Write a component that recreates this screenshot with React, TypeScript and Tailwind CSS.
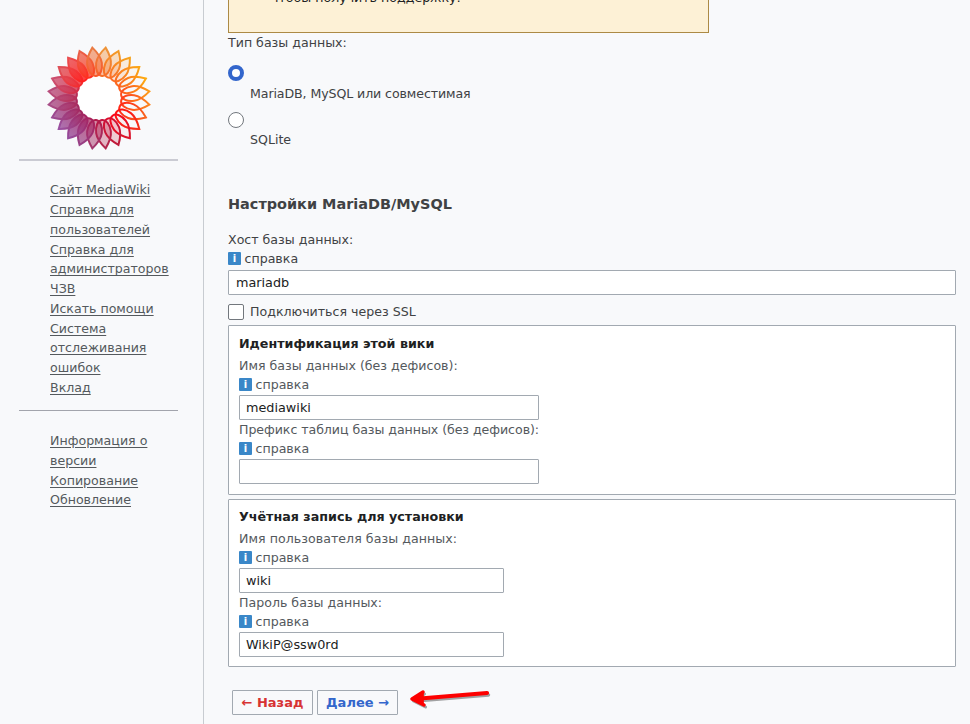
import React from "react";

type Petal = { outer: string; inner: string; fill: number };

const petals: Petal[] = [
  { outer: "#ee9438", inner: "#f5702c", fill: 0.42 },
  { outer: "#f39a26", inner: "#f8702a", fill: 0.28 },
  { outer: "#f5a31e", inner: "#fb6f26", fill: 0.14 },
  { outer: "#fba616", inner: "#fb6a22", fill: 0.04 },
  { outer: "#fdab12", inner: "#fd5f20", fill: 0 },
  { outer: "#fd9a18", inner: "#fd4f1e", fill: 0 },
  { outer: "#fb8420", inner: "#fe3f1c", fill: 0 },
  { outer: "#f9641f", inner: "#ff2a18", fill: 0 },
  { outer: "#f5301c", inner: "#ff1414", fill: 0 },
  { outer: "#d8142c", inner: "#f80a1c", fill: 0.05 },
  { outer: "#bd1c3c", inner: "#dc0c2c", fill: 0.2 },
  { outer: "#b0284e", inner: "#c41440", fill: 0.32 },
  { outer: "#a2386e", inner: "#b01c4c", fill: 0.5 },
  { outer: "#984288", inner: "#a8205a", fill: 0.7 },
  { outer: "#954c9c", inner: "#a42462", fill: 0.8 },
  { outer: "#9a52a2", inner: "#a02860", fill: 0.8 },
  { outer: "#9c4c94", inner: "#a42a62", fill: 0.8 },
  { outer: "#a84e88", inner: "#aa2c60", fill: 0.8 },
  { outer: "#b84e7c", inner: "#b83058", fill: 0.8 },
  { outer: "#cc5070", inner: "#d42e48", fill: 0.8 },
  { outer: "#de5058", inner: "#f42c30", fill: 0.82 },
  { outer: "#ea4e50", inner: "#ff2020", fill: 0.85 },
  { outer: "#ea6048", inner: "#ff3020", fill: 0.76 },
  { outer: "#ea7c44", inner: "#f85a2c", fill: 0.58 },
];

function Logo() {
  return (
    <svg className="block h-[104px] w-[104px]" viewBox="-52 -52 104 104">
      <defs>
        {petals.map((p, i) => (
          <linearGradient key={i} id={"petal" + i} gradientUnits="userSpaceOnUse" x1="0" y1="-50" x2="0" y2="-23">
            <stop offset="0" stopColor={p.outer} />
            <stop offset="1" stopColor={p.inner} />
          </linearGradient>
        ))}
      </defs>
      <circle r="24" fill="#fff" />
      {petals.map((p, i) => (
        <path
          key={i}
          transform={`rotate(${7.5 + i * 15})`}
          d="M0 -50.8C3.8 -46 7.4 -40.5 7.4 -34.5C7.4 -27.5 4.2 -22.300 0 -22.300C-4.2 -22.300 -7.4 -27.5 -7.4 -34.5C-7.4 -40.5 -3.8 -46 0 -50.8Z"
          fill={`url(#petal${i})`}
          fillOpacity={p.fill}
          stroke={`url(#petal${i})`}
          strokeWidth="2"
        />
      ))}
    </svg>
  );
}

function NavLinks({ items }: { items: string[] }) {
  return (
    <ul className="ml-[50px] w-[130px] text-[#54595d]">
      {items.map((t) => (
        <li key={t}>
          <a className="underline underline-offset-2">{t}</a>
        </li>
      ))}
    </ul>
  );
}

function Help() {
  return (
    <div className="flex h-5 items-center gap-[3.5px]">
      <span className="mb-px flex h-[13px] w-[13px] items-center justify-center rounded-[1px] bg-[#3a87c8] text-[10px] leading-none font-bold text-white">i</span>
      <span>справка</span>
    </div>
  );
}

function Field({ value, className }: { value: string; className: string }) {
  return (
    <div className={"flex h-[25px] items-center rounded-[1px] border border-[#a2a9b1] bg-white text-[12.8px] text-[#202122] " + className}>
      {value}
    </div>
  );
}

function Panel({ title, className, children }: { title: string; className: string; children: React.ReactNode }) {
  return (
    <section className={"rounded-[1px] border border-[#a2a9b1] bg-white pl-[10px] text-[#54595d] " + className}>
      <h3 className="h-[22px] text-[12.7px] font-bold text-[#202122]">{title}</h3>
      {children}
    </section>
  );
}

export default function App() {
  return (
    <div className="flex h-[724px] w-[970px] overflow-hidden bg-[#f8f9fb] font-['DejaVu_Sans',sans-serif] text-[12.6px] leading-5 text-[#404244]">
      <aside className="w-[204px] shrink-0 border-r border-[#c8ccd1] leading-[19.75px]">
        <div className="ml-[19px] flex h-[161px] w-[159px] justify-center border-b-2 border-[#cacbd3] pt-[46px]">
          <Logo />
        </div>
        <div className="h-[249px] pt-[19.4px]">
          <NavLinks
            items={[
              "Сайт MediaWiki",
              "Справка для пользователей",
              "Справка для администраторов",
              "ЧЗВ",
              "Искать помощи",
              "Система отслеживания ошибок",
              "Вклад",
            ]}
          />
        </div>
        <div className="ml-[19px] w-[159px] border-t border-[#a2a4ac]" />
        <div className="pt-5">
          <NavLinks items={["Информация о версии", "Копирование", "Обновление"]} />
        </div>
      </aside>
      <main className="ml-6 w-[728px]">
        <div className="h-[33px] w-[481px] overflow-hidden border border-t-0 border-[#ac8a45] bg-[#fdf1d6] pl-[42px] text-[#202122]">
          <p className="-mt-[12px]">чтобы получить поддержку:</p>
        </div>
        <p>Тип базы данных:</p>
        <div className="pt-3">
          <span className="block h-4 w-4 rounded-full border-[4px] border-[#3366cc] bg-white" />
          <p className="mt-[3px] pl-[22px] tracking-[-0.1px]">MariaDB, MySQL или совместимая</p>
        </div>
        <div className="pt-2">
          <span className="block h-4 w-4 rounded-full border border-[#72777d] bg-white" />
          <p className="mt-[2px] pl-[22px]">SQLite</p>
        </div>
        <h2 className="mt-[44px] text-[14.45px] font-bold">Настройки MariaDB/MySQL</h2>
        <p className="mt-4">Хост базы данных:</p>
        <div className="-mt-px">
          <Help />
        </div>
        <Field value="mariadb" className="mt-px w-[728px] px-[7px]" />
        <div className="mt-[7px] flex h-5 items-center gap-[6px]">
          <span className="mb-px h-4 w-4 rounded-[2px] border border-[#72777d] bg-white" />
          <span>Подключиться через SSL</span>
        </div>
        <Panel title="Идентификация этой вики" className="mt-[3px] h-[170px] pt-2">
          <p>Имя базы данных (без дефисов):</p>
          <div className="-mt-px h-5">
            <Help />
          </div>
          <Field value="mediawiki" className="w-[300px] px-[6px]" />
          <p className="tracking-[-0.06px]">Префикс таблиц базы данных (без дефисов):</p>
          <div className="-mt-px h-5">
            <Help />
          </div>
          <Field value="" className="w-[300px]" />
        </Panel>
        <Panel title="Учётная запись для установки" className="mt-1 h-[168px] pt-[7px]">
          <p className="tracking-[0.04px]">Имя пользователя базы данных:</p>
          <div className="-mt-px h-5">
            <Help />
          </div>
          <Field value="wiki" className="w-[265px] px-[6px]" />
          <p>Пароль базы данных:</p>
          <div className="-mt-px h-5">
            <Help />
          </div>
          <Field value="WikiP@ssw0rd" className="w-[265px] px-[6px]" />
        </Panel>
        <div className="mt-[23px] ml-1 flex gap-1 text-[13px]">
          <button className="h-[25px] w-[81px] rounded-[1px] border border-[#a2a9b1] font-bold whitespace-nowrap text-[#d73333]">← Назад</button>
          <button className="h-[25px] w-[81px] rounded-[1px] border border-[#a2a9b1] font-bold whitespace-nowrap text-[#3366cc]">Далее →</button>
          <svg className="-mt-[3px] ml-1 h-[26px] w-[90px]" viewBox="0 0 90 26" fill="none" strokeLinecap="round" strokeLinejoin="round">
            <g opacity="0.35" stroke="#000" transform="translate(1.5 2)">
              <path d="M8 12L81 6" strokeWidth="3.5" />
              <path d="M17 5L6 12L18 18" strokeWidth="3" />
            </g>
            <g stroke="#fd0000">
              <path d="M8 12L81 6" strokeWidth="4.2" />
              <path d="M17 5L6 12L18 18" strokeWidth="3.5" />
              <path d="M17 6L7 12L17 16.500Z" fill="#fd0000" strokeWidth="1" />
            </g>
          </svg>
        </div>
      </main>
    </div>
  );
}
